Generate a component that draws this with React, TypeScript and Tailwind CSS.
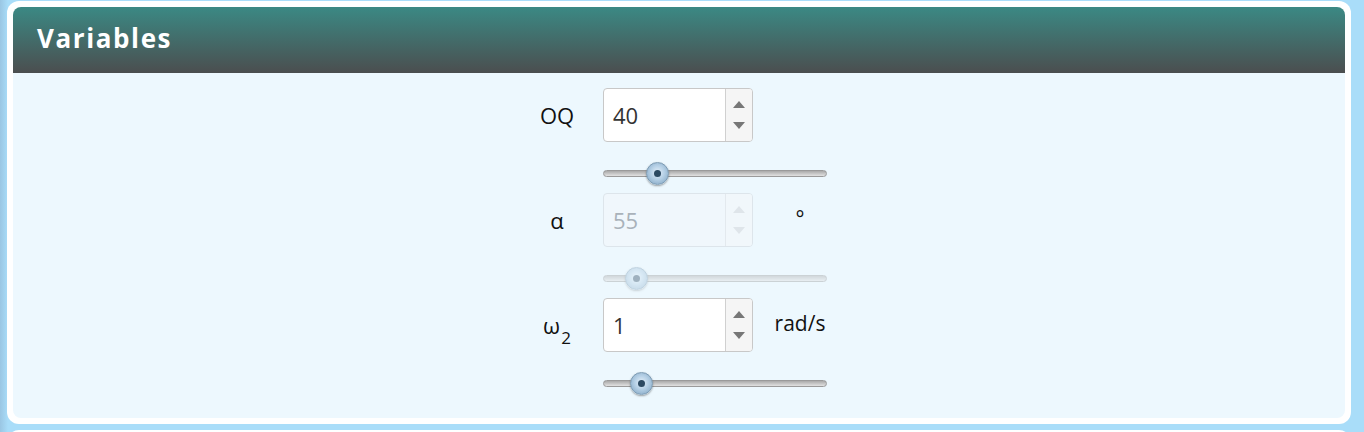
import React from 'react';

const font = { fontFamily: '"Open Sans", Lato, "Liberation Sans", sans-serif' };

function Spinner({ disabled }: { disabled?: boolean }) {
  return (
    <div className={`flex flex-col items-center justify-center gap-[14px] w-[27px] h-full border-l ${disabled ? 'border-[#e3e9ee] bg-[#f1f7fb]' : 'border-[#d0d0d0] bg-[#f5f5f5]'}`}>
      <div className={`w-0 h-0 border-l-[6px] border-r-[6px] border-b-[7px] border-l-transparent border-r-transparent ${disabled ? 'border-b-[#dfe5ea]' : 'border-b-[#777]'}`} />
      <div className={`w-0 h-0 border-l-[6px] border-r-[6px] border-t-[7px] border-l-transparent border-r-transparent ${disabled ? 'border-t-[#dfe5ea]' : 'border-t-[#777]'}`} />
    </div>
  );
}

function NumberBox({ value, disabled }: { value: string; disabled?: boolean }) {
  return (
    <div className={`flex w-[150px] h-[54px] rounded-[4px] border overflow-hidden ${disabled ? 'border-[#dde5eb] bg-[#f0f7fc]' : 'border-[#c8c8c8] bg-white'}`}>
      <div className={`flex-1 flex items-center pl-[9px] text-[22px] ${disabled ? 'text-[#a9b2ba]' : 'text-[#333]'}`}>{value}</div>
      <Spinner disabled={disabled} />
    </div>
  );
}

function Slider({ pos, disabled }: { pos: number; disabled?: boolean }) {
  return (
    <div className={`relative w-[224px] h-[22px] flex items-center ${disabled ? 'opacity-40' : ''}`}>
      <div className="w-full h-[7px] rounded-full border border-[#9a9a9a] bg-[linear-gradient(to_bottom,#a9a9a9,#e2e2e2)]" />
      <div
        className="absolute top-0 w-[23px] h-[23px] rounded-full border border-[#7d9bb3] bg-[radial-gradient(circle_at_50%_45%,#e4f0fa_0%,#b4cfe5_45%,#7a9fbd_100%)] shadow-[0_1px_2px_rgba(0,0,0,0.35)] flex items-center justify-center"
        style={{ left: pos - 11 }}
      >
        <div className="w-[7px] h-[7px] rounded-full bg-[#2c4a62]" />
      </div>
    </div>
  );
}

const rows = [
  { label: <>OQ</>, value: '40', unit: '', pos: 54 },
  { label: <>α</>, value: '55', unit: '°', pos: 33, disabled: true },
  { label: <>ω<sub className="text-[17px] align-[-6px] ml-[1px]">2</sub></>, value: '1', unit: 'rad/s', pos: 38 },
];

export default function App() {
  return (
    <div className="h-[432px] overflow-hidden bg-[linear-gradient(to_right,#9ac6e3_0px,#a9ddf9_8px,#a9ddf9_100%)] pl-[7px] pr-[13px] flex flex-col gap-[6px]" style={font}>
      <div className="shrink-0 mt-[1px] h-[423px] bg-white rounded-[12px] p-[6px] flex flex-col">
        <div className="h-[66px] shrink-0 rounded-t-[8px] bg-[linear-gradient(to_bottom,#3b8984,#4b4e4f)] flex items-center pl-[24px]">
          <h2 className="text-white text-[26px] font-bold tracking-[1.6px] mt-[-3px]">Variables</h2>
        </div>
        <div className="flex-1 bg-[#edf8fe] rounded-b-[8px] flex justify-center pt-[15px]">
          <div className="flex flex-col ml-[2px]">
            {rows.map((r, i) => (
              <div key={i} className="flex flex-col">
                <div className="flex items-center h-[54px]">
                  <div className="w-[90px] text-center text-[22px] text-[#111] pr-[2px]">{r.label}</div>
                  <NumberBox value={r.value} disabled={r.disabled} />
                  <div className="w-[94px] text-center text-[21px] text-[#111] mt-[-2px]">{r.unit}</div>
                </div>
                <div className="flex h-[51px] pt-[20px]">
                  <div className="w-[90px]" />
                  <Slider pos={r.pos} disabled={r.disabled} />
                </div>
              </div>
            ))}
          </div>
        </div>
      </div>
      <div className="h-[40px] shrink-0 bg-white rounded-[12px]" />
    </div>
  );
}
